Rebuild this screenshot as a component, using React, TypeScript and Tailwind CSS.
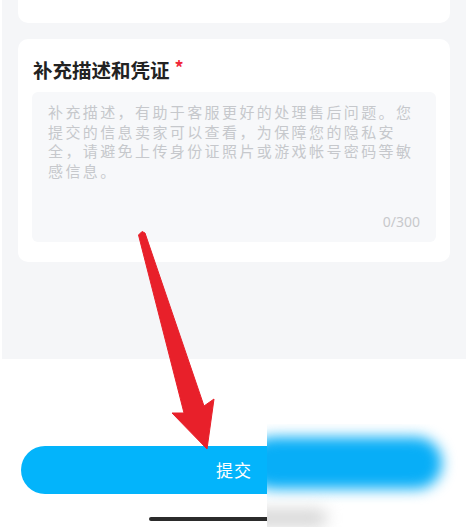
import React from "react";

export default function App() {
  const cjk = { fontFamily: '"Noto Sans CJK SC", "Noto Sans", sans-serif' };
  return (
    <div className="relative w-[468px] h-[527px] bg-white overflow-hidden" style={cjk}>
      <div className="mx-[2px] h-[359px] bg-[#f5f6f8] px-4 flex flex-col gap-4">
        <div className="h-[23px] bg-white rounded-b-[10px]" />
        <div className="bg-white rounded-[10px] px-[14px] pt-[17px] pb-[20px]">
          <div className="flex items-start pl-[1px]">
            <span className="text-[19.5px] leading-[28px] font-bold text-[#222]">补充描述和凭证</span>
            <span className="ml-[5px] mt-[1px] text-[18px] leading-[20px] font-bold text-[#f0273a]">*</span>
          </div>
          <div className="mt-2 h-[150px] bg-[#f7f8fa] rounded-[6px] pl-4 pr-[16px] pt-[10px] pb-[10px] flex flex-col">
            <p className="w-[372px] text-[15px] leading-[19.5px] tracking-[2.4px] text-[#c6c8cc]">
              补充描述，有助于客服更好的处理售后问题。您提交的信息卖家可以查看，为保障您的隐私安全，请避免上传身份证照片或游戏帐号密码等敏感信息。
            </p>
            <div className="mt-auto text-right text-[14px] leading-[20px] text-[#c8c9cc]" style={{ fontFamily: '"Noto Sans", sans-serif' }}>
              0/300
            </div>
          </div>
        </div>
      </div>

      <div className="mt-[87px] mx-[21px] h-[48px] rounded-full bg-[#03b4fb] flex items-center justify-center">
        <span className="text-[17px] text-white tracking-[1px]">提交</span>
      </div>
      <div className="mt-[23px] ml-[149px] w-[170px] h-[4px] rounded-full bg-[#2b2b2b]" />

      <div className="absolute left-[267px] top-[424px] w-[201px] h-[103px] bg-white overflow-hidden">
        <div className="absolute left-[-20px] top-[13px] w-[195px] h-[52px] rounded-full bg-[#08aef7] blur-[7px]" />
        <div className="absolute left-[-20px] top-[86px] w-[80px] h-[16px] rounded-full bg-[#d2d2d2] blur-[8px]" />
      </div>

      <svg className="absolute left-0 top-0 pointer-events-none" width="468" height="527" viewBox="0 0 468 527">
        <polygon
          points="138.5,235 142,231.5 145,233 204,406 214,399 207,449 172,413 184,413"
          fill="#e8202a"
          stroke="#e8202a"
          strokeWidth="1"
          strokeLinejoin="round"
        />
      </svg>
    </div>
  );
}
